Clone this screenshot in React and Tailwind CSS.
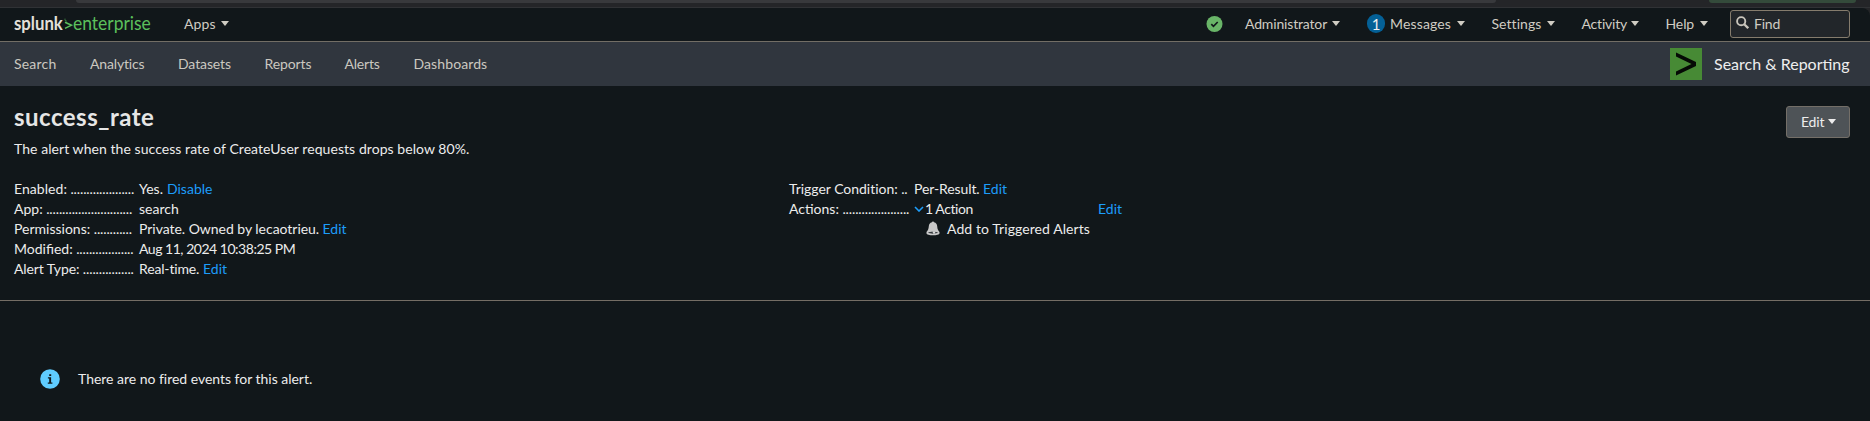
import React from 'react';

function Caret({ className = '' }) {
  return (
    <svg viewBox="0 0 8 5" className={`h-[5px] w-2 shrink-0 fill-current ${className}`}>
      <path d="M0 0h8L4 5z" />
    </svg>
  );
}

function Logo() {
  return (
    <div className="flex h-full w-[170px] shrink-0 items-center whitespace-nowrap text-[19px] leading-[26px]">
      <div className="w-[50px] pb-[2px]">
        <span className="inline-block origin-left scale-x-[0.88] font-bold text-[#e3e0da]">splunk</span>
      </div>
      <svg viewBox="0 0 9 12" className="mt-[1px] h-3 w-[9px] shrink-0 fill-none stroke-[#5cc05c]">
        <path d="M1 4.2 7.6 7.2 1 10.4" strokeWidth="1.5" />
        <path d="M1 .6v1.8l2 .9" strokeWidth=".8" opacity=".7" />
      </svg>
      <div className="pb-[2px]">
        <span className="inline-block origin-left scale-x-[0.92] text-[#5cc05c]">enterprise</span>
      </div>
    </div>
  );
}

function Menu({ label, width, textWidth, tracking }) {
  return (
    <div className={`flex shrink-0 items-center ${width}`}>
      <span className={`shrink-0 ${textWidth} ${tracking}`}>{label}</span>
      <Caret />
    </div>
  );
}

function Row({ label, dots, children, tracking = '' }) {
  return (
    <div className="flex h-5">
      <div className="flex w-[125px] shrink-0">
        <span className={`mr-[3.5px] ${tracking}`}>{label}</span>
        <span className="tracking-[-0.12px]">{'.'.repeat(dots)}</span>
      </div>
      <div className="flex">{children}</div>
    </div>
  );
}

function Link({ children, className = '' }) {
  return <a className={`text-[#1d9dfa] ${className}`}>{children}</a>;
}

export default function App() {
  return (
    <div className="flex h-[421px] w-[1870px] flex-col overflow-hidden bg-[#11171a] font-['Lato',sans-serif] text-[14px] leading-5 whitespace-nowrap text-[#ececec]">
      <div className="flex h-2 shrink-0 items-start border-b border-[#303235] bg-[#242528] pl-[76px]">
        <div className="h-[3px] w-[1420px] rounded-b-full bg-[#38393c]" />
        <div className="ml-[213px] h-[3px] w-[147px] rounded-b-full bg-[#344b3b]" />
      </div>

      <div className="shrink-0 bg-[#242528]">
        <header className="flex h-[34px] items-center rounded-tr-lg border-b border-[#726e65] bg-[#11171a] pb-[2px] pl-[14px] text-[#d0ccc3]">
          <Logo />
          <Menu label="Apps" width="w-[1022px]" textWidth="w-[37px]" tracking="tracking-[0.1px]" />
          <svg viewBox="0 0 18 18" className="h-[18px] w-[17px] shrink-0">
            <circle cx="9" cy="9" r="8.5" fill="#69b568" />
            <path d="m5.6 9.2 2.3 2.2 4.5-4.5" fill="none" stroke="#11171a" strokeWidth="1.8" />
          </svg>
          <div className="ml-[22px] flex items-center">
            <Menu label="Administrator" width="w-[122px]" textWidth="w-[86.5px]" tracking="tracking-[-0.16px]" />
            <div className="mr-[5px] flex h-[19px] w-[18px] items-center justify-center rounded-full bg-[#046096] text-[15px] text-[#eeeeee]">1</div>
            <Menu label="Messages" width="w-[101.5px]" textWidth="w-[66.5px]" tracking="tracking-[0.15px]" />
            <Menu label="Settings" width="w-[90px]" textWidth="w-[55px]" tracking="tracking-[0.05px]" />
            <Menu label="Activity" width="w-[84px]" textWidth="w-[49.5px]" tracking="tracking-[-0.2px]" />
            <Menu label="Help" width="w-[64.5px]" textWidth="w-[34px]" tracking="tracking-[-0.1px]" />
          </div>
          <div className="flex h-7 w-[120px] shrink-0 items-center rounded-[3px] border border-[#857c6d] bg-[#22262a] pl-[5px]">
            <svg viewBox="0 0 13 13" className="mr-[5px] mb-[2px] h-[13px] w-[13px] fill-none stroke-[#c9c5bc]">
              <circle cx="5.2" cy="5.2" r="4.1" strokeWidth="1.9" />
              <path d="m8.2 8.2 4 4" strokeWidth="2.3" />
            </svg>
            <span className="tracking-[-0.2px]">Find</span>
          </div>
        </header>
      </div>

      <nav className="flex h-11 shrink-0 items-center bg-[#30363e] pl-[14px] text-[#cbc8c0]">
        <div className="flex pb-px">
          <span className="w-[76px] tracking-[0.2px]">Search</span>
          <span className="w-[88px] tracking-[-0.15px]">Analytics</span>
          <span className="w-[86.5px] tracking-[-0.1px]">Datasets</span>
          <span className="w-20 tracking-[-0.1px]">Reports</span>
          <span className="w-[69px] tracking-[-0.2px]">Alerts</span>
          <span className="tracking-[0.1px]">Dashboards</span>
        </div>
        <div className="mr-5 ml-auto flex items-center">
          <svg viewBox="0 0 32 32" className="mr-3 h-8 w-8">
            <path d="M0 0h32v32H0z" fill="#478a35" />
            <path d="M6 4.5 26 14v4L6 27.5v-4L21.5 16 6 8.5z" fill="#050a05" />
          </svg>
          <span className="w-[136px] pb-px text-[16px] text-[#eeeeee]">Search &amp; Reporting</span>
        </div>
      </nav>

      <section className="flex h-[215px] shrink-0 flex-col border-b border-[#756e65] pr-5 pl-[14px]">
        <div className="flex h-[93px] shrink-0 items-start justify-between">
          <div className="pt-[15px]">
            <h1 className="h-8 text-[24px] leading-8 font-bold tracking-[0.5px] text-[#e6e6e6]">success_rate</h1>
            <p className="mt-[6px] tracking-[0.06px]">The alert when the success rate of CreateUser requests drops below 80%.</p>
          </div>
          <button className="mt-5 flex h-8 w-16 items-center rounded-[3px] border border-[#746f68] bg-[#4e5357] pb-px pl-[14px] text-[#ededed]">
            <span className="w-[27px] shrink-0 text-left tracking-[-0.2px]">Edit</span>
            <Caret />
          </button>
        </div>

        <div className="flex">
          <div className="w-[775px]">
            <Row label="Enabled:" dots={20} tracking="tracking-[0.05px]">
              <span className="w-7">Yes.</span>
              <Link>Disable</Link>
            </Row>
            <Row label="App:" dots={27}>search</Row>
            <Row label="Permissions:" dots={12}>
              <span className="w-[183.5px] tracking-[-0.03px]">Private. Owned by lecaotrieu.</span>
              <Link>Edit</Link>
            </Row>
            <Row label="Modified:" dots={18}>
              <span className="tracking-[-0.48px]">Aug 11, 2024 10:38:25 PM</span>
            </Row>
            <Row label="Alert Type:" dots={16} tracking="tracking-[-0.1px]">
              <span className="w-[64px] tracking-[-0.15px]">Real-time.</span>
              <Link>Edit</Link>
            </Row>
          </div>
          <div>
            <Row label="Trigger Condition:" dots={2} tracking="tracking-[-0.03px]">
              <span className="w-[69px] tracking-[-0.1px]">Per-Result.</span>
              <Link>Edit</Link>
            </Row>
            <Row label="Actions:" dots={21}>
              <svg viewBox="0 0 10 6" className="mt-[7px] mr-[1px] h-[6px] w-[10px] fill-none stroke-[#1d9dfa]">
                <path d="m1 1 4 4 4-4" strokeWidth="1.6" />
              </svg>
              <span className="w-[173px] tracking-[-0.45px]">1 Action</span>
              <Link>Edit</Link>
            </Row>
            <div className="flex h-5 pl-[137px]">
              <svg viewBox="0 0 14 15" className="mt-[2px] mr-[7px] h-[15px] w-[14px]">
                <path d="M6 1.2C6 .2 8 .2 8 1.2c2.2.5 3 2 3.2 4 .2 3 .8 4 2.3 5.8v1.2c0 2.8-13 2.8-13 0V11C2 9.2 2.6 8 2.8 5.2 3 3.2 3.8 1.7 6 1.2z" fill="#c8c8c8" />
                <path d="M2 11.6c1.5-1.3 8.5-1.3 10 0-1.5 1.5-8.5 1.5-10 0z" fill="#33383b" />
                <circle cx="8" cy="11.5" r="1.2" fill="#d8d8d8" />
              </svg>
              <span className="tracking-[0.08px]">Add to Triggered Alerts</span>
            </div>
          </div>
        </div>
      </section>

      <div className="flex items-center pt-[68px] pl-10">
        <svg viewBox="0 0 20 20" className="mr-[18px] h-5 w-5">
          <circle cx="10" cy="10" r="9.8" fill="#5fccff" />
          <path d="M9.2 5.2h2V7h-2zM7.9 8.2h3.2v5.2h1.3v1.4H7.8v-1.4h1.4V9.6H7.900z" fill="#11171a" />
        </svg>
        <span className="tracking-[-0.02px]">There are no fired events for this alert.</span>
      </div>
    </div>
  );
}
